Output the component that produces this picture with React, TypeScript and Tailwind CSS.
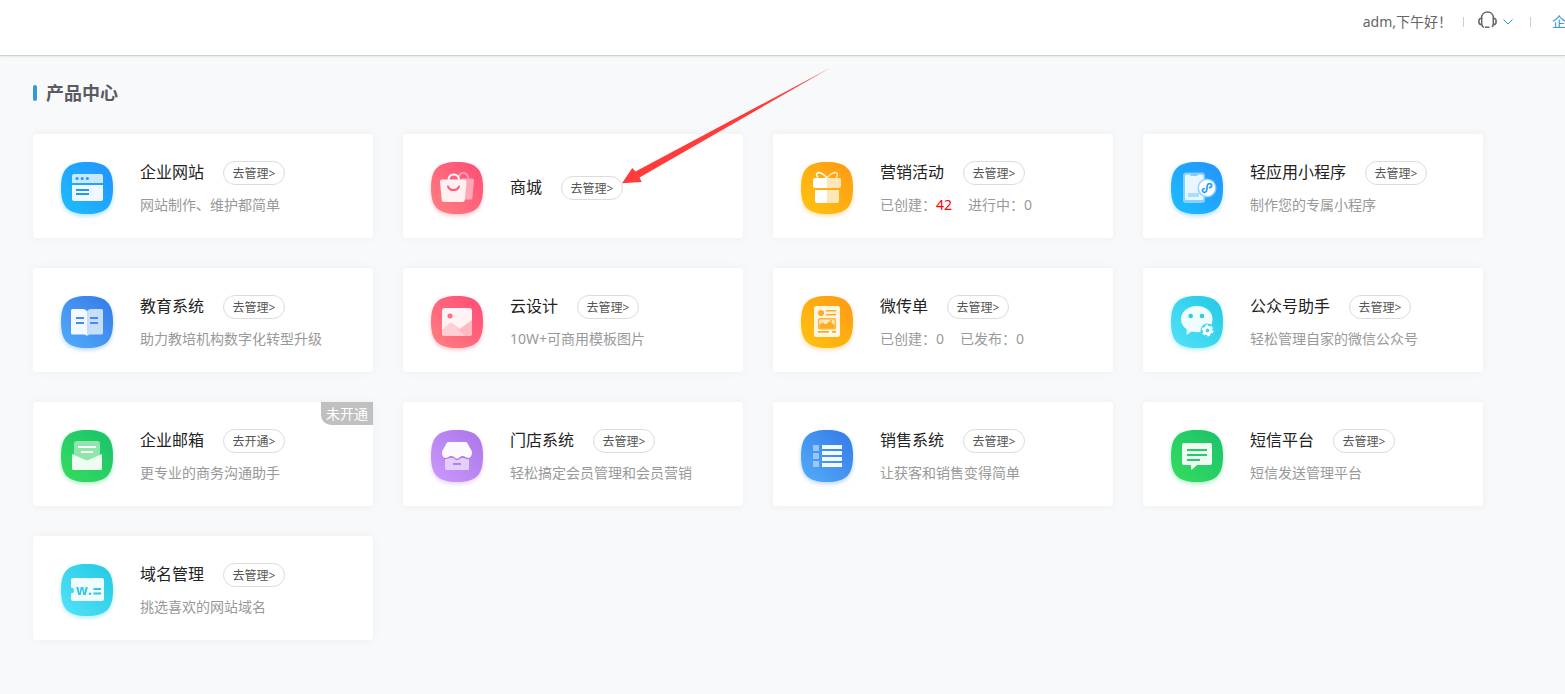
import type { ReactNode } from 'react'

type Tone = 'sky' | 'pink' | 'orange' | 'blue' | 'cyan' | 'green' | 'purple'

const tones: Record<Tone, { from: string; to: string; shadow: string }> = {
  sky: { from: '#1cbaff', to: '#2296ff', shadow: 'drop-shadow-[0_2px_2px_rgba(30,160,255,0.35)]' },
  pink: { from: '#ff7b80', to: '#ff5078', shadow: 'drop-shadow-[0_2px_2px_rgba(255,95,120,0.35)]' },
  orange: { from: '#ffc010', to: '#ff9c14', shadow: 'drop-shadow-[0_2px_2px_rgba(255,170,20,0.35)]' },
  blue: { from: '#50a8f8', to: '#377ee9', shadow: 'drop-shadow-[0_2px_2px_rgba(60,140,240,0.35)]' },
  cyan: { from: '#4fe0f6', to: '#27cbe6', shadow: 'drop-shadow-[0_2px_2px_rgba(50,205,235,0.35)]' },
  green: { from: '#32da5f', to: '#1dc46b', shadow: 'drop-shadow-[0_2px_2px_rgba(35,205,100,0.35)]' },
  purple: { from: '#c795fb', to: '#ae79e9', shadow: 'drop-shadow-[0_2px_2px_rgba(180,130,240,0.35)]' },
}

const WebsiteGlyph = (
  <>
    <path d="M13 12h27a2 2 0 0 1 2 2v7H11v-7a2 2 0 0 1 2-2z" fill="#fff" opacity=".75" />
    <path d="M11 23h31v14a2 2 0 0 1-2 2H13a2 2 0 0 1-2-2z" fill="#f0f8ff" />
    <g fill="#2196ff">
      <circle cx="16" cy="16.5" r="1.5" />
      <circle cx="21.2" cy="16.5" r="1.5" />
      <circle cx="26.4" cy="16.5" r="1.5" />
      <rect x="15" y="27" width="13" height="2" />
      <rect x="15" y="31" width="13" height="2" />
    </g>
  </>
)

const ShopGlyph = (
  <>
    <g opacity=".45">
      <path d="M28 15.5c0-6 8-6.500 9.500 1" fill="none" stroke="#fff" strokeWidth="1.8" />
      <path d="M30 16.5h11a2 2 0 0 1 2 2.200l-1.600 17a2 2 0 0 1-2 1.900H30z" fill="#fff" />
    </g>
    <path d="M17.5 18c0-7.500 10.500-7.500 10.500 0" fill="none" stroke="#fff" strokeWidth="2" />
    <path d="M11 17.500h22.500a2 2 0 0 1 2 2.200l-1.600 18a2.500 2.500 0 0 1-2.500 2.300H13.200a2.500 2.500 0 0 1-2.500-2.300L9 19.700a2 2 0 0 1 2-2.200z" fill="#fff0f2" />
    <path d="M17 24.500c2 4.800 9 4.800 11 0" fill="none" stroke="#ff5d78" strokeWidth="2" strokeLinecap="round" />
  </>
)

const GiftGlyph = (
  <>
    <path d="M26 16c-3-4-7-6-9-5.200s-2 3 0 4.700" fill="none" stroke="#fff" strokeWidth="1.6" />
    <path d="M26 16c3-4 7-6 9-5.200s2 3 0 4.700" fill="none" stroke="#ffe8bd" strokeWidth="1.6" />
    <path d="M14 16h12v10H14a2 2 0 0 1-2-2v-6a2 2 0 0 1 2-2zM14 28h12v13H16a2 2 0 0 1-2-2z" fill="#fff" />
    <path d="M26 16h12a2 2 0 0 1 2 2v6a2 2 0 0 1-2 2H26zM26 28h12v11a2 2 0 0 1-2 2H26z" fill="#ffe6b8" />
  </>
)

const MiniAppGlyph = (
  <>
    <rect x="12" y="10.5" width="22" height="30.5" rx="3" fill="#fff" opacity=".45" />
    <path d="M15.5 12.5H19l1 1.500h6l1-1.500h3.500a2 2 0 0 1 2 2v22a1.500 1.500 0 0 1-1.500 1.500H15.500a1.500 1.500 0 0 1-1.500-1.500V14a1.500 1.500 0 0 1 1.500-1.500z" fill="#e8f6ff" />
    <rect x="17" y="31" width="11" height="4" fill="#a9dcff" />
    <circle cx="36" cy="26" r="9.5" fill="#8dd0ff" />
    <circle cx="36" cy="26" r="8" fill="#fff" />
    <path d="M33.5 26.5c-3 .5-2.500 4 0 3.800 2 0 2.500-1.500 2.500-4.300s.8-4.300 2.500-4.300c2.800 0 3 3.600 0 3.900" fill="none" stroke="#249dff" strokeWidth="1.7" strokeLinecap="round" />
  </>
)

const BookGlyph = (
  <>
    <path d="M11.5 13H22c2 0 3.500 1 4 2.500V40c-1-1-2-1.500-4-1.500H11.500A1.500 1.500 0 0 1 10 37V14.500a1.500 1.500 0 0 1 1.500-1.500z" fill="#f4f9ff" />
    <path d="M40.5 13H30c-2 0-3.500 1-4 2.500V40c1-1 2-1.500 4-1.500h10.500A1.500 1.500 0 0 0 42 37V14.500a1.500 1.500 0 0 0-1.500-1.500z" fill="#c6defc" />
    <path d="M15 22h8M15 27h8M29 22h8M29 27h8" stroke="#428cf0" strokeWidth="2" />
  </>
)

const ImageGlyph = (
  <>
    <rect x="11" y="12" width="30" height="28" rx="3" fill="#fff3f5" />
    <circle cx="19" cy="20" r="2.5" fill="#ff6d83" />
    <path d="M11 34l9-7.500 8.500 6.500L41 24v13a3 3 0 0 1-3 3H14a3 3 0 0 1-3-3z" fill="#ffb9c2" />
    <path d="M11 34l9-7.500L34 40H14a3 3 0 0 1-3-3z" fill="#ffcfd5" />
  </>
)

const FlyerGlyph = (
  <>
    <rect x="13" y="10" width="26" height="31" rx="2.5" fill="#fff6e2" />
    <g fill="#ffab22">
      <circle cx="20" cy="17" r="3" />
      <rect x="25" y="14" width="10" height="1.5" />
      <rect x="25" y="18" width="10" height="1.5" />
      <rect x="17" y="35" width="11" height="1.7" />
      <rect x="31" y="35" width="4" height="1.7" />
    </g>
    <rect x="17.7" y="22.7" width="16.6" height="10" rx="1" fill="#ffe9bd" stroke="#ffb53a" strokeWidth="1.5" />
    <path d="M18.500 32v-3.500l3-2 3 2 4.500-3.500 4.500 4.500V32z" fill="#ffab22" />
    <circle cx="30" cy="25" r="1" fill="#ffab22" />
  </>
)

const WechatGlyph = (
  <>
    <path d="M26 10c-9 0-16 5.800-16 13.200 0 4.300 2.300 7.800 5.800 10.100L15.500 39l5-3.500c1.700.5 3.600.7 5.500.7 9 0 15.500-5.600 15.500-13S35 10 26 10z" fill="#f0fdff" />
    <circle cx="19.7" cy="20" r="2.3" fill="#2dcbe6" />
    <circle cx="31" cy="20" r="2.3" fill="#2dcbe6" />
    <circle cx="36.5" cy="34.5" r="7" fill="#40d6ee" />
    <circle cx="36.5" cy="34.5" r="3.3" fill="none" stroke="#fff" strokeWidth="2.8" />
    <circle cx="36.5" cy="34.5" r="5" fill="none" stroke="#fff" strokeWidth="2" strokeDasharray="2.6 2.636" />
  </>
)

const MailGlyph = (
  <>
    <rect x="13" y="11" width="26" height="24" rx="2.5" fill="#8fe6ab" />
    <path d="M17 17h18M20 22h12" stroke="#fff" strokeWidth="2" />
    <path d="M11 24l13.500 6a4 4 0 0 0 3 0L41 24v14.500a1.500 1.500 0 0 1-1.500 1.500h-27a1.500 1.500 0 0 1-1.500-1.500z" fill="#effcf2" />
  </>
)

const StoreGlyph = (
  <>
    <path d="M14 27h24v11.500a1.500 1.500 0 0 1-1.500 1.500h-21a1.500 1.500 0 0 1-1.500-1.500z" fill="#e4cffb" />
    <path d="M17.500 12h17a2 2 0 0 1 1.800 1.100L40.700 21c.8 3.500-.7 7-3.700 7-2.500 0-3-2-5.500-2s-3 2.500-5.500 2.500-3-2.500-5.500-2.500-3 2-5.500 2c-3 0-4.500-3.500-3.700-7l4.400-7.900a2 2 0 0 1 1.800-1.100z" fill="#fdfaff" />
    <path d="M13 28.500c2.500 1 4-1.500 7.500-1.500s3 2.500 5.500 2.500 3-2.500 5.500-2.500 5 2.500 7.500 1.500" fill="none" stroke="#b17bea" strokeWidth="1.3" />
    <rect x="22" y="33" width="8" height="2" fill="#b57ff0" />
  </>
)

const ListGlyph = (
  <>
    <path d="M12 15h6v6h-6zM12 23h6v6h-6zM12 31h6v6h-6z" fill="#fff" opacity=".45" />
    <path d="M21 15h20v4H21zM21 21h20v4H21zM21 27h20v4H21zM21 33h20v4H21z" fill="#f2f8ff" />
  </>
)

const SmsGlyph = (
  <>
    <path d="M13 13h26a2 2 0 0 1 2 2v18a2 2 0 0 1-2 2H26l-5 4.500a.6.6 0 0 1-1-.4V35h-7a2 2 0 0 1-2-2V15a2 2 0 0 1 2-2z" fill="#effcf2" />
    <path d="M16 20h20M16 25h20M16 30h13" stroke="#25cc66" strokeWidth="2" />
  </>
)

const DomainGlyph = (
  <>
    <path d="M12 14h29a2 2 0 0 1 2 2v19a2 2 0 0 1-2 2H12a2 2 0 0 1-2-2v-5.500a3 3 0 0 0 0-6V16a2 2 0 0 1 2-2z" fill="#effdff" />
    <text x="15" y="31" fill="#2fc7df" className="font-['Open_Sans',sans-serif] text-[14px] font-bold">
      w.
    </text>
    <path d="M32.500 25h7.500M32.500 29.500h7.500" stroke="#2fc7df" strokeWidth="2" />
  </>
)

interface Product {
  title: string
  action: string
  tone: Tone
  glyph: ReactNode
  description?: string
  stats?: { label: string; value: number; highlight?: boolean }[]
  badge?: string
  pointed?: boolean
}

const products: Product[] = [
  { title: '企业网站', action: '去管理', tone: 'sky', glyph: WebsiteGlyph, description: '网站制作、维护都简单' },
  { title: '商城', action: '去管理', tone: 'pink', glyph: ShopGlyph, pointed: true },
  {
    title: '营销活动',
    action: '去管理',
    tone: 'orange',
    glyph: GiftGlyph,
    stats: [
      { label: '已创建', value: 42, highlight: true },
      { label: '进行中', value: 0 },
    ],
  },
  { title: '轻应用小程序', action: '去管理', tone: 'sky', glyph: MiniAppGlyph, description: '制作您的专属小程序' },
  { title: '教育系统', action: '去管理', tone: 'blue', glyph: BookGlyph, description: '助力教培机构数字化转型升级' },
  { title: '云设计', action: '去管理', tone: 'pink', glyph: ImageGlyph, description: '10W+可商用模板图片' },
  {
    title: '微传单',
    action: '去管理',
    tone: 'orange',
    glyph: FlyerGlyph,
    stats: [
      { label: '已创建', value: 0 },
      { label: '已发布', value: 0 },
    ],
  },
  { title: '公众号助手', action: '去管理', tone: 'cyan', glyph: WechatGlyph, description: '轻松管理自家的微信公众号' },
  { title: '企业邮箱', action: '去开通', tone: 'green', glyph: MailGlyph, description: '更专业的商务沟通助手', badge: '未开通' },
  { title: '门店系统', action: '去管理', tone: 'purple', glyph: StoreGlyph, description: '轻松搞定会员管理和会员营销' },
  { title: '销售系统', action: '去管理', tone: 'blue', glyph: ListGlyph, description: '让获客和销售变得简单' },
  { title: '短信平台', action: '去管理', tone: 'green', glyph: SmsGlyph, description: '短信发送管理平台' },
  { title: '域名管理', action: '去管理', tone: 'cyan', glyph: DomainGlyph, description: '挑选喜欢的网站域名' },
]

const ProductIcon = ({ id, tone, children }: { id: string; tone: Tone; children: ReactNode }) => {
  const { from, to, shadow } = tones[tone]
  return (
    <svg viewBox="0 0 52 52" className={`size-[52px] shrink-0 ${shadow}`} aria-hidden="true">
      <defs>
        <linearGradient id={id} x1="0.1" y1="0.9" x2="0.9" y2="0.1">
          <stop offset="0" stopColor={from} />
          <stop offset="1" stopColor={to} />
        </linearGradient>
      </defs>
      <path d="M26 0C45 0 52 7 52 26S45 52 26 52 0 45 0 26 7 0 26 0z" fill={`url(#${id})`} />
      {children}
    </svg>
  )
}

const PointerArrow = () => (
  <svg
    viewBox="0 0 210 117"
    className="pointer-events-none absolute bottom-4 left-[60px] z-10 h-[117px] w-[210px]"
    aria-hidden="true"
  >
    <path d="M1 116.300L11.300 101l3.200 3.500L209 1 18.500 110.500l2.200 4.500z" fill="#ff3b3b" />
  </svg>
)

const ProductCard = ({ product, index }: { product: Product; index: number }) => (
  <li className="relative flex min-h-[104px] items-center gap-[27px] rounded-[3px] bg-white pt-[27px] pr-4 pb-[23px] pl-7 shadow-[0_0_10px_rgba(0,0,0,0.05)]">
    <ProductIcon id={`icon-${index}`} tone={product.tone}>
      {product.glyph}
    </ProductIcon>
    <div>
      <div className="flex items-start gap-[19px]">
        <h2 className="text-base leading-[22px] text-[#222]">{product.title}</h2>
        <div className="relative">
          <button
            type="button"
            className="block h-6 w-[62px] rounded-full border border-[#dcdcdc] bg-white pt-0.5 text-xs leading-5 whitespace-nowrap text-[#555]"
          >
            {product.action}&gt;
          </button>
          {product.pointed && <PointerArrow />}
        </div>
      </div>
      {product.description && (
        <p className="mt-[10px] text-sm leading-5 text-[#999]">{product.description}</p>
      )}
      {product.stats && (
        <p className="mt-[10px] flex gap-4 text-sm leading-5 text-[#999]">
          {product.stats.map((stat) => (
            <span key={stat.label}>
              {stat.label}：<span className={stat.highlight ? 'text-[#f00]' : ''}>{stat.value}</span>
            </span>
          ))}
        </p>
      )}
    </div>
    {product.badge && (
      <span className="absolute top-0 right-0 rounded-bl-[10px] bg-[#c0c0c0] px-[5px] text-sm leading-[23px] text-white">
        {product.badge}
      </span>
    )}
  </li>
)

const Header = () => (
  <header className="h-14 border-b border-[#d0d3d4] bg-white shadow-[0_1px_2px_rgba(0,0,0,0.08)]">
    <div className="flex h-11 items-center justify-end overflow-hidden text-sm whitespace-nowrap">
      <span className="text-[#666]">adm,下午好！</span>
      <span className="ml-[11px] h-[10px] w-px bg-[#ccc]" />
      <button type="button" aria-label="客服" className="ml-[14px] flex items-center gap-[6px]">
        <svg viewBox="0 0 19 18" className="mb-1 h-[18px] w-[19px]" fill="none" stroke="#666" strokeWidth="1.5">
          <path d="M3.500 7.500C3.500 3.500 6 1 9.500 1s6 2.500 6 6.500" />
          <path d="M3.700 7.300v6.400C1.800 13.700.8 12.500.8 10.500s1-3.200 2.900-3.200zM15.300 7.300v6.400c1.900 0 2.900-1.200 2.900-3.200s-1-3.200-2.900-3.200z" />
          <path d="M3.700 13.700c.5 1.600 1.300 2.300 2.500 2.600M7 16.300h4.500M15.300 13.700c-.3 1-.8 1.700-1.500 2" />
        </svg>
        <svg viewBox="0 0 10 6" className="h-[6px] w-[10px]" fill="none" stroke="#3498db">
          <path d="M.5.5L5 5 9.500.5" />
        </svg>
      </button>
      <span className="ml-[17px] h-[10px] w-px bg-[#ccc]" />
      <a href="#" className="ml-[21px] w-[13px] overflow-hidden text-[#3498db]">
        企
      </a>
    </div>
  </header>
)

export default function App() {
  return (
    <div className="min-h-screen bg-[#f8f9fb] font-['Noto_Sans','Noto_Sans_CJK_SC',sans-serif]">
      <Header />
      <main className="px-[33px] pt-[25px] pb-[54px]">
        <div className="mb-[29px] flex items-center gap-[9px]">
          <span className="h-4 w-1 rounded-[2px] bg-[#3498db]" />
          <h1 className="text-lg leading-6 font-bold text-[#5a5a62]">产品中心</h1>
        </div>
        <ul className="grid grid-cols-[repeat(auto-fill,340px)] gap-[30px]">
          {products.map((product, index) => (
            <ProductCard key={product.title} product={product} index={index} />
          ))}
        </ul>
      </main>
    </div>
  )
}
